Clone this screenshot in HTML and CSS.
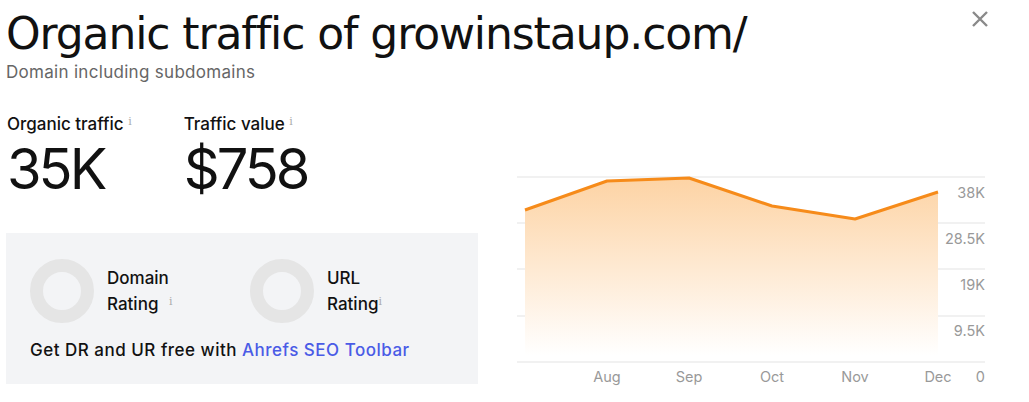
FILE: index.html
```html
<!DOCTYPE html>
<html lang="en">
<head>
    <meta charset="UTF-8">
    <title>Organic traffic</title>
    <link rel="stylesheet" href="styles.css">
</head>
<body>
    <div class="header">
        <div>
            <h1>Organic traffic of growinstaup.com/</h1>
            <p class="subtitle">Domain including subdomains</p>
        </div>
        <button class="close" aria-label="Close">
            <svg width="18" height="18" viewBox="0 0 18 18"><path d="M2 2 L16 16 M16 2 L2 16" stroke="#8a8a8a" stroke-width="2.4"/></svg>
        </button>
    </div>

    <div class="content">
        <div class="left">
            <div class="metrics">
                <div class="metric">
                    <div class="metric-label">Organic traffic <span class="info">i</span></div>
                    <div class="metric-value">35K</div>
                </div>
                <div class="metric">
                    <div class="metric-label">Traffic value <span class="info">i</span></div>
                    <div class="metric-value">$758</div>
                </div>
            </div>

            <div class="ratings">
                <div class="rating-row">
                    <div class="rating">
                        <div class="ring"></div>
                        <div class="rating-name">Domain<br>Rating <span class="info spaced">i</span></div>
                    </div>
                    <div class="rating">
                        <div class="ring"></div>
                        <div class="rating-name">URL<br>Rating<span class="info">i</span></div>
                    </div>
                </div>
                <p class="promo">Get DR and UR free with <a href="#">Ahrefs SEO Toolbar</a></p>
            </div>
        </div>

        <div class="chart">
            <svg width="490" height="227" viewBox="0 0 490 227">
                <defs>
                    <linearGradient id="fade" x1="0" y1="0" x2="0" y2="1">
                        <stop offset="0" stop-color="#fdd3a4"/>
                        <stop offset="1" stop-color="#ffffff"/>
                    </linearGradient>
                </defs>
                <!-- grid -->
                <g stroke="#ececec" stroke-width="1.5">
                    <line x1="7" y1="12" x2="475" y2="12"/>
                    <line x1="7" y1="58" x2="475" y2="58"/>
                    <line x1="7" y1="104" x2="475" y2="104"/>
                    <line x1="7" y1="151" x2="475" y2="151"/>
                    <line x1="7" y1="197" x2="475" y2="197"/>
                </g>
                <path d="M15 45 L97 16 L179 13 L262 41 L345 54 L428 27 L428 190 L15 190 Z" fill="url(#fade)"/>
                <path d="M15 45 L97 16 L179 13 L262 41 L345 54 L428 27" fill="none" stroke="#f68b1a" stroke-width="3" stroke-linejoin="round"/>
                <g class="axis" text-anchor="end">
                    <text x="475" y="33">38K</text>
                    <text x="475" y="79">28.5K</text>
                    <text x="475" y="125">19K</text>
                    <text x="475" y="171">9.5K</text>
                    <text x="475" y="217">0</text>
                </g>
                <g class="axis" text-anchor="middle">
                    <text x="97" y="217">Aug</text>
                    <text x="179" y="217">Sep</text>
                    <text x="262" y="217">Oct</text>
                    <text x="345" y="217">Nov</text>
                    <text x="428" y="217">Dec</text>
                </g>
            </svg>
        </div>
    </div>
</body>
</html>
```

FILE: styles.css
```css
body {
    margin: 0;
    font-family: Inter, "Noto Sans", sans-serif;
    color: #111;
    background-color: #fff;
}

.header {
    display: flex;
    justify-content: space-between;
    align-items: flex-start;
    padding: 8px 40px 0 6px;
}

h1 {
    margin: 0;
    font-family: "DejaVu Sans", sans-serif;
    font-size: 44px;
    font-weight: 400;
    line-height: 52px;
    letter-spacing: -1.1px;
}

.subtitle {
    margin: 2px 0 0;
    font-size: 17px;
    letter-spacing: 0.3px;
    color: #666;
}

.close {
    background: none;
    border: none;
    padding: 0;
    margin-top: 2px;
    cursor: pointer;
}

.content {
    display: flex;
}

.left {
    width: 472px;
    margin-left: 6px;
}

.metrics {
    display: flex;
    gap: 52px;
    padding: 32px 0 0 1px;
}

.metric-label {
    font-size: 17px;
    font-weight: 500;
}

.info {
    font-family: "DejaVu Serif", serif;
    font-size: 11px;
    color: #aaa;
    vertical-align: 5px;
}

.info.spaced {
    margin-left: 6px;
}

.metric-value {
    font-size: 56px;
    line-height: 70px;
    letter-spacing: -3px;
}

.ratings {
    margin-top: 29px;
    background-color: #f3f4f6;
    padding: 26px 24px 18px;
    height: 107px;
}

.rating-row {
    display: flex;
    gap: 60px;
}

.rating {
    display: flex;
    align-items: center;
    gap: 13px;
    width: 160px;
}

.ring {
    width: 38px;
    height: 38px;
    border: 13px solid #e5e5e5;
    border-radius: 50%;
    flex-shrink: 0;
}

.rating-name {
    font-size: 17px;
    font-weight: 500;
    line-height: 24px;
}

.promo {
    margin: 17px 0 0;
    font-size: 17px;
    font-weight: 500;
    letter-spacing: 0.5px;
}

.promo a {
    color: #4a5be6;
    text-decoration: none;
}

.chart {
    margin: 83px 0 0 32px;
}

.axis text {
    font-family: Inter, sans-serif;
    font-size: 14.5px;
    fill: #999;
}
```
